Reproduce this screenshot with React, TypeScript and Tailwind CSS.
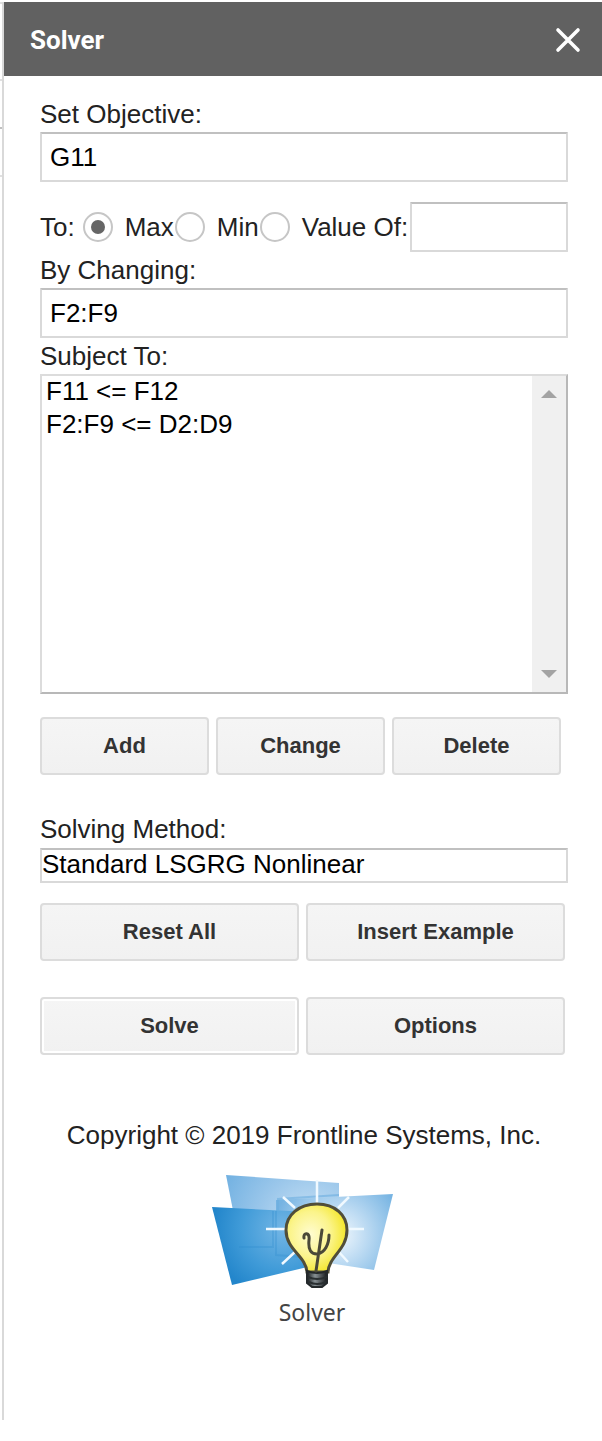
import React, { useState } from "react";

const fieldClass =
  "block w-full min-w-0 h-[50px] border-2 border-[#d9d9d9] border-t-[#c0c0c0] rounded-[1px] bg-white px-2 text-[26px] text-black outline-none";
const labelClass = "block h-9 leading-9";
const radioClass =
  "appearance-none grid place-items-center shrink-0 size-[30px] rounded-full border-2 border-[#c6c6c6] bg-white checked:before:content-[''] checked:before:size-[14px] checked:before:rounded-full checked:before:bg-[#666]";

function ActionButton({ children, primary = false }: { children: React.ReactNode; primary?: boolean }) {
  return (
    <button
      type="button"
      className={
        primary
          ? "h-[58px] rounded-[4px] border-2 border-[#dcdcdc] bg-linear-to-b from-[#f5f5f5] to-[#f1f1f1] pb-[2px] text-[22px] font-bold text-[#333] shadow-[inset_0_0_0_2px_#fff]"
          : "h-[58px] rounded-[4px] border-2 border-[#dcdcdc] bg-linear-to-b from-[#f5f5f5] to-[#f1f1f1] pb-[2px] text-[22px] font-bold text-[#333]"
      }
    >
      {children}
    </button>
  );
}

function SolverLogo() {
  return (
    <svg viewBox="0 0 186 120" className="block h-[120px] w-[186px]" aria-hidden="true">
      <defs>
        <radialGradient id="back" gradientUnits="userSpaceOnUse" cx="100" cy="52" r="100">
          <stop offset="0" stopColor="#cde4f6" />
          <stop offset="0.5" stopColor="#9dc8eb" />
          <stop offset="1" stopColor="#70b0e1" />
        </radialGradient>
        <radialGradient id="right" gradientUnits="userSpaceOnUse" cx="128" cy="62" r="66">
          <stop offset="0" stopColor="#f0f7fd" />
          <stop offset="0.4" stopColor="#bfdcf3" />
          <stop offset="1" stopColor="#75b3e2" />
        </radialGradient>
        <radialGradient id="front" gradientUnits="userSpaceOnUse" cx="72" cy="56" r="70">
          <stop offset="0" stopColor="#74b6e5" />
          <stop offset="0.6" stopColor="#409bd8" />
          <stop offset="1" stopColor="#2386cb" />
        </radialGradient>
        <radialGradient id="glass" cx="0.4" cy="0.45" r="0.62">
          <stop offset="0" stopColor="#fffcd1" />
          <stop offset="0.55" stopColor="#fbf48a" />
          <stop offset="1" stopColor="#f3e522" />
        </radialGradient>
        <linearGradient id="cap">
          <stop offset="0" stopColor="#15191b" />
          <stop offset="0.4" stopColor="#879094" />
          <stop offset="1" stopColor="#17191b" />
        </linearGradient>
      </defs>
      <path d="M15 2L128 10V80L30 78Z" fill="url(#back)" />
      <path d="M65 27L182 21L163 97L65 82Z" fill="url(#right)" />
      <path d="M1 34L99 39L105 92L21 112Z" fill="url(#front)" />
      <path d="M65 38V82L92 84M28 74H62V38" fill="none" stroke="#2787ca" strokeWidth="2" opacity="0.25" />
      <path d="M128 22L67 26V37" fill="none" stroke="#6aade0" strokeWidth="2" opacity="0.6" />
      <path
        d="M106 7V30M72 24L84 35M138 24L127 35M55 56H74M136 56H153M71 91L85 78M137 89L127 78"
        stroke="#f0f9ff"
        strokeWidth="2.5"
      />
      <path
        d="M96 99C95 83 75 77 75 57C75 42 88 31 106 31C124 31 136 42 136 57C136 77 118 83 117 99Z"
        fill="url(#glass)"
        stroke="#514e39"
        strokeWidth="3"
      />
      <path d="M96 98Q106 102 116 98V110L111 114H101L96 110Z" fill="url(#cap)" stroke="#24292b" strokeWidth="2" />
      <path d="M97 104Q106 108 116 104M98 109Q106 113 115 109" fill="none" stroke="#292f31" strokeWidth="2" />
      <path
        d="M93 65C92 59 99 59 98 67C97 77 100 81 106 81C114 80 118 71 118 62M111 57L105 98"
        fill="none"
        stroke="#4b4938"
        strokeWidth="3"
        strokeLinecap="round"
      />
    </svg>
  );
}

export default function App() {
  const [goal, setGoal] = useState("max");
  return (
    <div className="flex bg-white pt-[2px] font-['Liberation_Sans',Arial,sans-serif] text-[26px] text-[#222]">
      <div className="w-[2px] shrink-0">
        <div className="h-[2px] bg-[#e0e0e0]" />
        <div className="mt-[75px] h-[2px] bg-[#e0e0e0]" />
        <div className="mt-[46px] h-[2px] bg-[#c0c0c0]" />
        <div className="mt-[46px] h-[2px] bg-[#e0e0e0]" />
      </div>
      <aside className="min-w-0 flex-1 border-l-2 border-[#d9d9d9] pb-[93px]">
        <header className="flex h-[74px] items-center justify-between bg-[#616161] pt-[2px] pr-[21px] pl-[26px] text-white">
          <h1 className="font-[Roboto,sans-serif] text-[26px] font-bold">Solver</h1>
          <button type="button" aria-label="Close" className="size-[26px]">
            <svg viewBox="0 0 26 26" className="block size-[26px]" fill="none" stroke="currentColor" strokeWidth="3.6" strokeLinecap="round">
              <path d="M3 3L23 23M23 3L3 23" />
            </svg>
          </button>
        </header>
        <main className="pt-5 pr-[34px] pl-9">
          <label htmlFor="objective" className={labelClass}>Set Objective:</label>
          <input id="objective" type="text" defaultValue="G11" className={fieldClass} />

          <div role="radiogroup" aria-label="To" className="mt-5 flex items-center">
            <span className="mr-2">To:</span>
            <input id="max" type="radio" name="goal" className={radioClass} checked={goal === "max"} onChange={() => setGoal("max")} />
            <label htmlFor="max" className="mr-px ml-3">Max</label>
            <input id="min" type="radio" name="goal" className={radioClass} checked={goal === "min"} onChange={() => setGoal("min")} />
            <label htmlFor="min" className="mr-px ml-3">Min</label>
            <input id="value" type="radio" name="goal" className={radioClass} checked={goal === "value"} onChange={() => setGoal("value")} />
            <label htmlFor="value" className="mr-[2px] ml-3 whitespace-nowrap">Value Of:</label>
            <div className="min-w-0 flex-1">
              <input type="text" aria-label="Target value" className={fieldClass} />
            </div>
          </div>

          <label htmlFor="changing" className={labelClass}>By Changing:</label>
          <input id="changing" type="text" defaultValue="F2:F9" className={fieldClass} />

          <label htmlFor="constraints" className={labelClass}>Subject To:</label>
          <div className="flex h-80 border-2 border-[#b8b8b8] border-t-[#dcdcdc] border-l-[#dcdcdc]">
            <select id="constraints" size={2} className="h-full min-w-0 flex-1 appearance-none overflow-hidden bg-white text-[26px] text-black outline-none">
              <option className="h-[33px] px-1 leading-[32px]">F11 &lt;= F12</option>
              <option className="h-[33px] px-1 leading-[32px]">F2:F9 &lt;= D2:D9</option>
            </select>
            <div className="flex w-[34px] flex-col items-center justify-between bg-[#f0f0f0] py-[14px]">
              <svg viewBox="0 0 16 8" className="h-2 w-4" fill="#a3a3a3"><path d="M0 8L8 0L16 8Z" /></svg>
              <svg viewBox="0 0 16 8" className="h-2 w-4" fill="#a3a3a3"><path d="M0 0L8 8L16 0Z" /></svg>
            </div>
          </div>

          <div className="mt-[23px] grid grid-cols-3 gap-[7px] pr-[7px]">
            <ActionButton>Add</ActionButton>
            <ActionButton>Change</ActionButton>
            <ActionButton>Delete</ActionButton>
          </div>

          <label htmlFor="method" className="mt-9 block h-[37px] leading-9">Solving Method:</label>
          <select id="method" className="block h-[35px] w-full appearance-none border-2 border-[#d9d9d9] border-t-[#c0c0c0] bg-white pb-[2px] text-[26px] leading-[29px] text-black outline-none">
            <option>Standard LSGRG Nonlinear</option>
          </select>

          <div className="mt-5 grid grid-cols-2 gap-x-[7px] gap-y-9 pr-[3px]">
            <ActionButton>Reset All</ActionButton>
            <ActionButton>Insert Example</ActionButton>
            <ActionButton primary>Solve</ActionButton>
            <ActionButton>Options</ActionButton>
          </div>
          <footer className="mt-[62px] flex flex-col items-center">
            <p className="leading-9">Copyright © 2019 Frontline Systems, Inc.</p>
            <div className="mt-5 flex flex-col items-center">
              <SolverLogo />
              <span className="mt-1 pl-4 font-['Noto_Sans',sans-serif] text-[23px] leading-[30px] text-[#444]">Solver</span>
            </div>
          </footer>
        </main>
      </aside>
    </div>
  );
}
